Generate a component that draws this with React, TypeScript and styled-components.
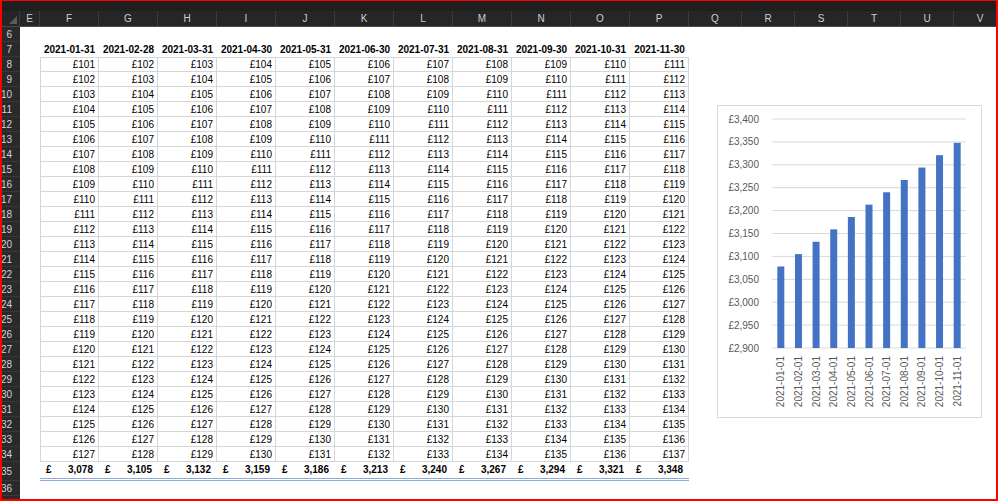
import styled, { createGlobalStyle } from "styled-components";

const GlobalStyle = createGlobalStyle`
  html, body {
    margin: 0;
    padding: 0;
    background: #ffffff;
    overflow: hidden;
  }
  body {
    font-family: "Liberation Sans", Arial, sans-serif;
  }
`;

const MAIN_COLS = ["F", "G", "H", "I", "J", "K", "L", "M", "N", "O", "P"];
const REST_COLS = ["Q", "R", "S", "T", "U", "V"];
const GRID = "18px 20px repeat(11, 59px) repeat(6, 53px)";

const Frame = styled.div`
  width: 998px;
  height: 501px;
  box-sizing: border-box;
  border-style: solid;
  border-color: #ff0000;
  border-width: 1px 2px 2px 2px;
  display: flex;
  flex-direction: column;
  overflow: hidden;
  background: #ffffff;
`;

const TopStrip = styled.div`
  height: 10px;
  flex: none;
  background: #1f1f1f;
`;

const HeaderRow = styled.div`
  display: grid;
  grid-template-columns: ${GRID};
  height: 16px;
  flex: none;
  background: #262626;
  box-sizing: border-box;
  border-bottom: 1px solid #4a4a4a;
`;

const Corner = styled.div`
  display: flex;
  justify-content: flex-end;
  align-items: flex-end;
  border-right: 1px solid #3c3c3c;
`;

const CornerMark = styled.div`
  width: 0;
  height: 0;
  border-left: 8px solid transparent;
  border-bottom: 8px solid #5c5c5c;
  margin: 0 2px 2px 0;
`;

const ColHead = styled.div`
  color: #cfcfcf;
  font-size: 10px;
  line-height: 15px;
  text-align: center;
  border-right: 1px solid #3c3c3c;
`;

const Sheet = styled.div`
  position: relative;
  flex: 1;
  overflow: hidden;
`;

const Row = styled.div<{ $h: number }>`
  display: grid;
  grid-template-columns: ${GRID};
  height: ${({ $h }) => $h}px;
`;

const RowHead = styled.div`
  background: #2a2a2a;
  color: #d2d2d2;
  font-size: 10px;
  display: flex;
  align-items: center;
  justify-content: flex-end;
  padding-right: 8px;
  box-sizing: border-box;
  border-bottom: 1px solid #383838;
`;

const Cell = styled.div<{
  $grid?: boolean;
  $top?: boolean;
  $left?: boolean;
  $bold?: boolean;
  $align?: "left" | "center" | "right";
}>`
  box-sizing: border-box;
  display: flex;
  align-items: center;
  justify-content: ${({ $align }) =>
    $align === "center" ? "center" : $align === "left" ? "flex-start" : "flex-end"};
  padding: 0 3px;
  font-size: 10px;
  color: #000000;
  font-weight: ${({ $bold }) => ($bold ? 700 : 400)};
  white-space: nowrap;
  overflow: visible;
  border-right: ${({ $grid }) => ($grid ? "1px solid #d6d6d6" : "none")};
  border-bottom: ${({ $grid }) => ($grid ? "1px solid #d6d6d6" : "none")};
  border-top: ${({ $top }) => ($top ? "1px solid #d6d6d6" : "none")};
  border-left: ${({ $left }) => ($left ? "1px solid #d6d6d6" : "none")};
`;

const TotalCell = styled.div`
  box-sizing: border-box;
  display: flex;
  justify-content: space-between;
  align-items: flex-start;
  padding: 2px 6px 0 6px;
  font-size: 10px;
  font-weight: 700;
  color: #000000;
  border-bottom: 3px double #8eaadb;
`;

const ChartBox = styled.div`
  position: absolute;
  left: 715px;
  top: 78px;
  width: 265px;
  height: 313px;
  box-sizing: border-box;
  border: 1px solid #d9d9d9;
  background: #ffffff;
`;

const ChartLabel = styled.text`
  font-family: "Liberation Sans", Arial, sans-serif;
  font-size: 10px;
  fill: #595959;
`;

const totals = MAIN_COLS.map((_, c) => {
  let s = 0;
  for (let r = 8; r <= 34; r++) s += 101 + (r - 8) + c;
  return s;
});

const headers = [
  "2021-01-31",
  "2021-02-28",
  "2021-03-31",
  "2021-04-30",
  "2021-05-31",
  "2021-06-30",
  "2021-07-31",
  "2021-08-31",
  "2021-09-30",
  "2021-10-31",
  "2021-11-30",
];

const money = (n: number) => n.toLocaleString("en-GB");

function Chart() {
  const x0 = 54;
  const x1 = 248;
  const yTop = 13;
  const yBot = 242;
  const step = (x1 - x0) / totals.length;
  const scale = (yBot - yTop) / 500;
  const ticks = [3400, 3350, 3300, 3250, 3200, 3150, 3100, 3050, 3000, 2950, 2900];

  return (
    <ChartBox>
      <svg width="263" height="311" viewBox="0 0 263 311">
        {ticks.map((t) => {
          const y = yBot - (t - 2900) * scale;
          return (
            <g key={t}>
              <line x1={x0} x2={x1} y1={y} y2={y} stroke="#d9d9d9" strokeWidth="1" />
              <ChartLabel x={41} y={y + 3.5} textAnchor="end">
                £{money(t)}
              </ChartLabel>
            </g>
          );
        })}
        {totals.map((v, i) => {
          const cx = x0 + step * (i + 0.5);
          const top = yBot - (v - 2900) * scale;
          const label = `2021-${String(i + 1).padStart(2, "0")}-01`;
          return (
            <g key={i}>
              <rect x={cx - 3.5} y={top} width="7" height={yBot - top} fill="#4472c4" />
              <ChartLabel
                x={cx + 3.5}
                y={250}
                textAnchor="end"
                transform={`rotate(-90 ${cx + 3.5} 250)`}
              >
                {label}
              </ChartLabel>
            </g>
          );
        })}
      </svg>
    </ChartBox>
  );
}

export default function App() {
  const dataRows = [];
  for (let r = 8; r <= 34; r++) dataRows.push(r);

  return (
    <>
      <GlobalStyle />
      <Frame>
        <TopStrip />
        <HeaderRow>
          <Corner>
            <CornerMark />
          </Corner>
          <ColHead>E</ColHead>
          {[...MAIN_COLS, ...REST_COLS].map((c) => (
            <ColHead key={c}>{c}</ColHead>
          ))}
        </HeaderRow>
        <Sheet>
          <Row $h={15}>
            <RowHead>6</RowHead>
          </Row>
          <Row $h={15}>
            <RowHead>7</RowHead>
            <Cell />
            {headers.map((h) => (
              <Cell key={h} $bold $align="center">
                {h}
              </Cell>
            ))}
          </Row>
          {dataRows.map((r) => (
            <Row key={r} $h={15}>
              <RowHead>{r}</RowHead>
              <Cell />
              {MAIN_COLS.map((c, ci) => (
                <Cell key={c} $grid $top={r === 8} $left={ci === 0}>
                  £{101 + (r - 8) + ci}
                </Cell>
              ))}
            </Row>
          ))}
          <Row $h={19}>
            <RowHead>35</RowHead>
            <Cell />
            {totals.map((t, i) => (
              <TotalCell key={i}>
                <span>£</span>
                <span>{money(t)}</span>
              </TotalCell>
            ))}
          </Row>
          <Row $h={15}>
            <RowHead>36</RowHead>
          </Row>
          <Row $h={15}>
            <RowHead>37</RowHead>
          </Row>
          <Chart />
        </Sheet>
      </Frame>
    </>
  );
}
